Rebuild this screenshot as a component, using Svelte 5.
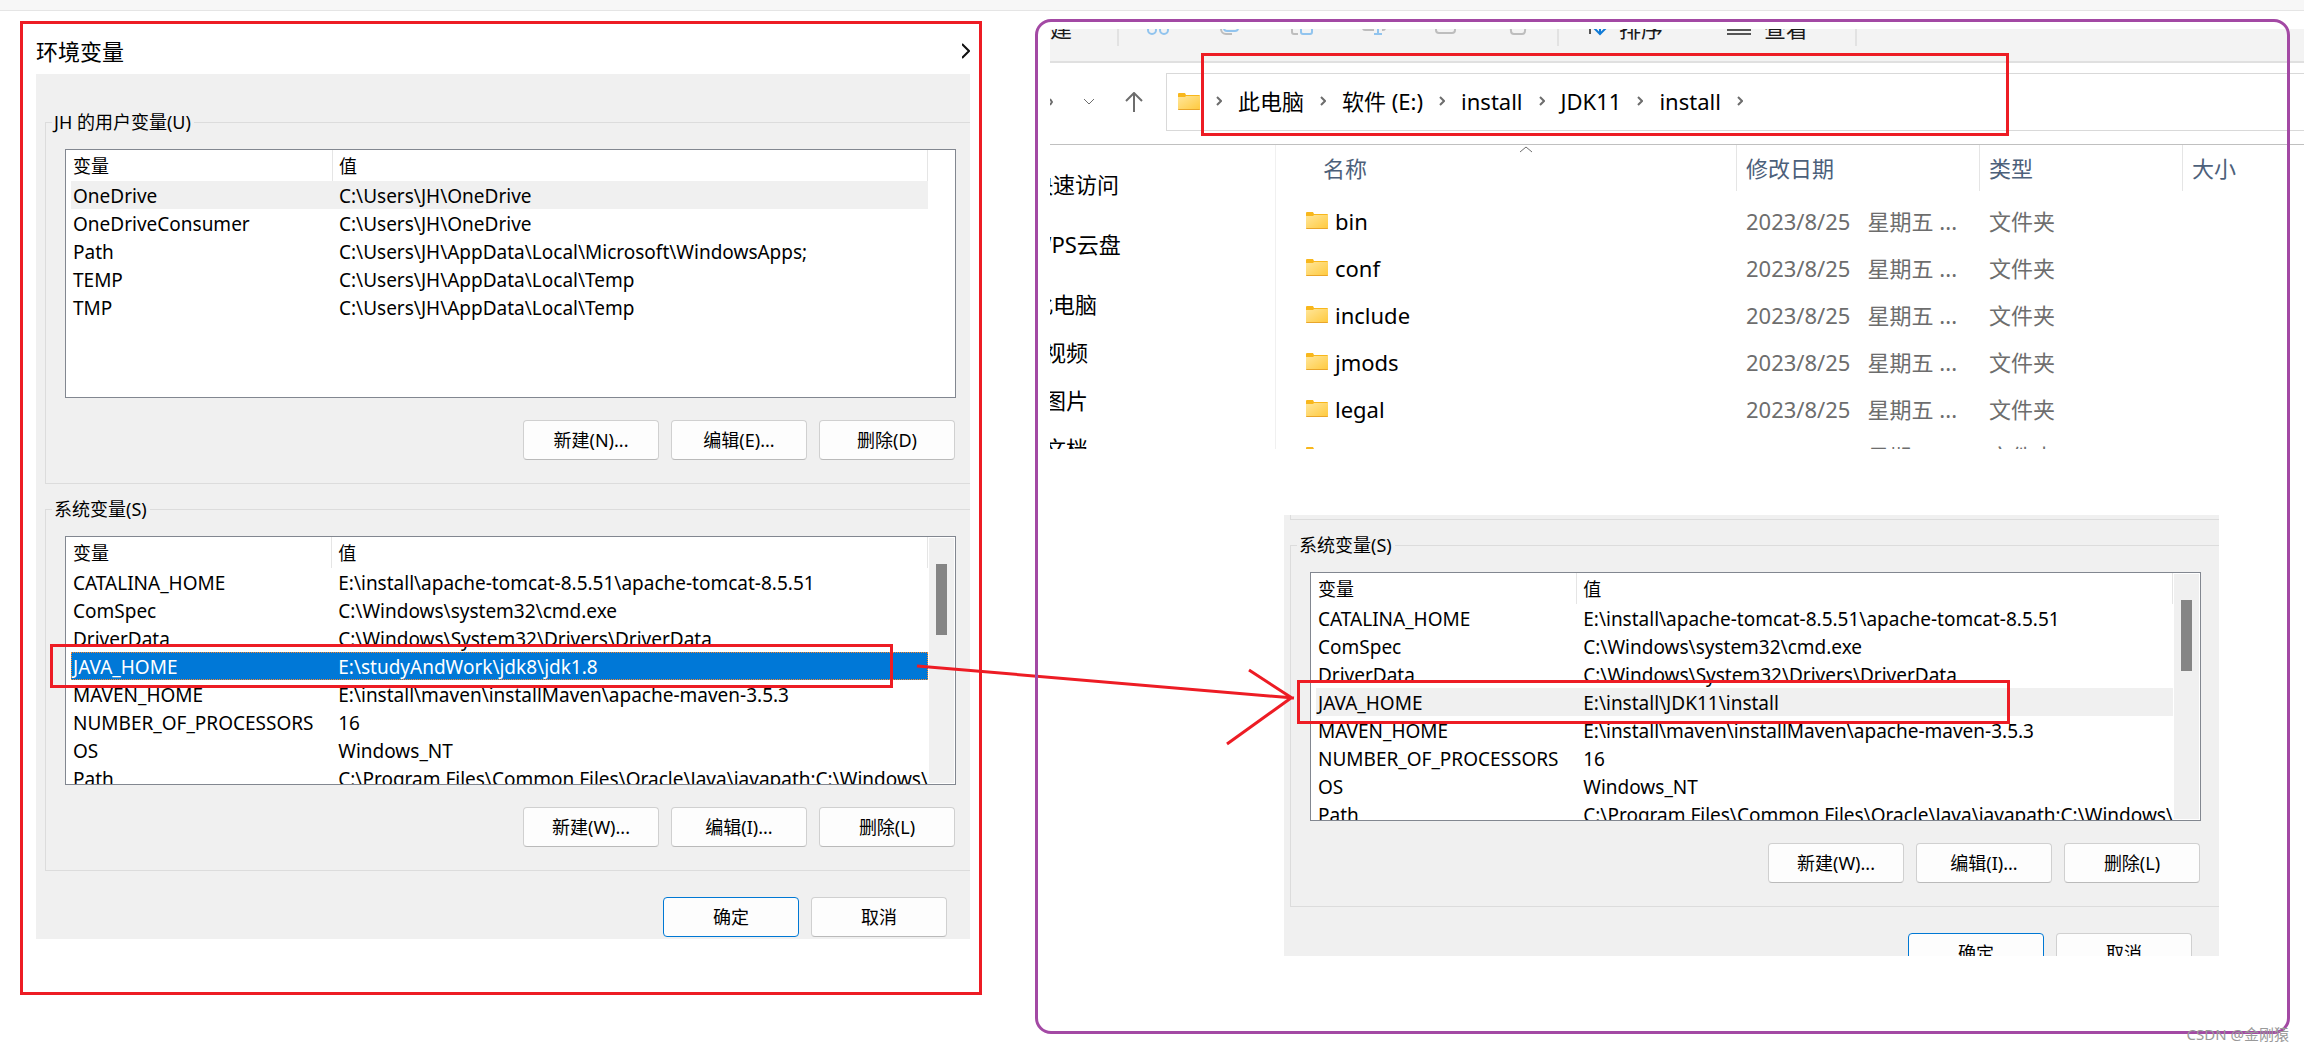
<script>
	const userVars = [
		{ name: 'OneDrive', value: 'C:\\Users\\JH\\OneDrive', state: 'inactive' },
		{ name: 'OneDriveConsumer', value: 'C:\\Users\\JH\\OneDrive' },
		{ name: 'Path', value: 'C:\\Users\\JH\\AppData\\Local\\Microsoft\\WindowsApps;' },
		{ name: 'TEMP', value: 'C:\\Users\\JH\\AppData\\Local\\Temp' },
		{ name: 'TMP', value: 'C:\\Users\\JH\\AppData\\Local\\Temp' }
	];

	const systemVars = (javaHome, state) => [
		{ name: 'CATALINA_HOME', value: 'E:\\install\\apache-tomcat-8.5.51\\apache-tomcat-8.5.51' },
		{ name: 'ComSpec', value: 'C:\\Windows\\system32\\cmd.exe' },
		{ name: 'DriverData', value: 'C:\\Windows\\System32\\Drivers\\DriverData' },
		{ name: 'JAVA_HOME', value: javaHome, state },
		{ name: 'MAVEN_HOME', value: 'E:\\install\\maven\\installMaven\\apache-maven-3.5.3' },
		{ name: 'NUMBER_OF_PROCESSORS', value: '16' },
		{ name: 'OS', value: 'Windows_NT' },
		{ name: 'Path', value: 'C:\\Program Files\\Common Files\\Oracle\\Java\\javapath;C:\\Windows\\' }
	];

	const before = systemVars('E:\\studyAndWork\\jdk8\\jdk1.8', 'selected');
	const after = systemVars('E:\\install\\JDK11\\install', 'inactive');

	const crumbs = ['此电脑', '软件 (E:)', 'install', 'JDK11', 'install'];
	const folders = ['bin', 'conf', 'include', 'jmods', 'legal', 'lib'];
	const places = [
		{ label: '快速访问' },
		{ label: 'WPS云盘' },
		{ label: '此电脑' },
		{ label: '视频', child: true },
		{ label: '图片', child: true },
		{ label: '文档', child: true }
	];
</script>

{#snippet varGroup(title, rows, buttons, scroll, marked)}
	<fieldset>
		<legend>{title}</legend>
		<div class="list-wrap">
			<div class="list">
				<table class="vars">
					<thead>
						<tr><th class="name">变量</th><th>值</th></tr>
					</thead>
					<tbody>
						{#each rows as row}
							<tr class={row.state}><td>{row.name}</td><td>{row.value}</td></tr>
						{/each}
					</tbody>
				</table>
				<div class="track" class:scroll>
					{#if scroll}<div class="thumb"></div>{/if}
				</div>
			</div>
			{#if marked}<div class="mark"></div>{/if}
		</div>
		<div class="buttons">
			{#each buttons as label}
				<button class="btn">{label}</button>
			{/each}
		</div>
	</fieldset>
{/snippet}

{#snippet confirm()}
	<div class="confirm">
		<button class="btn primary">确定</button>
		<button class="btn">取消</button>
	</div>
{/snippet}

{#snippet folder()}
	<svg class="folder" width="22" height="17" viewBox="0 0 22 17" aria-hidden="true">
		<path d="M0 1a1 1 0 0 1 1-1h6l1 2h13a1 1 0 0 1 1 1v2H0z" fill="#f8b71c" />
		<path d="M0 4h7l1-1h14v13a1 1 0 0 1-1 1H1a1 1 0 0 1-1-1z" fill="url(#folderFill)" />
		<path d="M0 16h22a1 1 0 0 1-1 1H1a1 1 0 0 1-1-1z" fill="#e9a52a" />
	</svg>
{/snippet}

{#snippet chevron()}
	<svg class="chevron" width="6" height="10" viewBox="0 0 6 10" aria-hidden="true"><path d="M1 1l4 4-4 4" /></svg>
{/snippet}

<svg class="defs" width="0" height="0" aria-hidden="true">
	<linearGradient id="folderFill" x1="0" y1="0" x2="1" y2="1">
		<stop offset="0" stop-color="#ffe69a" />
		<stop offset="1" stop-color="#ffc93c" />
	</linearGradient>
</svg>

<div class="page">
	<div class="topbar"></div>
	<main>
		<section class="left">
			<header class="title">
				<h1>环境变量</h1>
				<button class="close" aria-label="关闭">
					<svg width="8" height="16" viewBox="0 0 8 16"><path d="M0 1l7 7-7 7" /></svg>
				</button>
			</header>
			<div class="dialog">
				{@render varGroup('JH 的用户变量(U)', userVars, ['新建(N)...', '编辑(E)...', '删除(D)'], false, false)}
				{@render varGroup('系统变量(S)', before, ['新建(W)...', '编辑(I)...', '删除(L)'], true, true)}
				{@render confirm()}
			</div>
		</section>

		<section class="right">
			<div class="explorer">
				<div class="toolbar">
					<div class="tools">
						<button class="new">新建</button>
						<i class="sep"></i>
						<div class="icons">
							<button aria-label="剪切"><svg width="24" height="24" viewBox="0 0 24 24" stroke="#91c4ee"><circle cx="6" cy="14" r="4" /><circle cx="18" cy="14" r="4" /><path d="M8 11L17 0M16 11L7 0" /></svg></button>
							<button aria-label="复制"><svg width="24" height="24" viewBox="0 0 24 24" stroke="#bdbdbd"><path d="M3 4v9a5 5 0 0 0 5 5h6" /><path d="M6 0v12a3 3 0 0 0 3 3h8a3 3 0 0 0 3-3V0" stroke="#91c4ee" /></svg></button>
							<button aria-label="粘贴"><svg width="24" height="24" viewBox="0 0 24 24" stroke="#bdbdbd"><path d="M2 2v14a2 2 0 0 0 2 2h4" /><path d="M11 8v8a2 2 0 0 0 2 2h7a2 2 0 0 0 2-2V8a2 2 0 0 0-2-2h-7a2 2 0 0 0-2 2z" stroke="#91c4ee" /></svg></button>
							<button aria-label="重命名"><svg width="24" height="24" viewBox="0 0 24 24" stroke="#bdbdbd"><path d="M12 3H3a2 2 0 0 0-2 2v7a2 2 0 0 0 2 2h9M20 3h1a2 2 0 0 1 2 2v7a2 2 0 0 1-2 2h-1" /><path d="M12 0h8M16 0v18M12 18h8" stroke="#91c4ee" /></svg></button>
							<button aria-label="共享"><svg width="24" height="24" viewBox="0 0 24 24" stroke="#bdbdbd"><path d="M2 4v10a3 3 0 0 0 3 3h13a3 3 0 0 0 3-3V9" /></svg></button>
							<button aria-label="删除"><svg width="24" height="24" viewBox="0 0 24 24" stroke="#bdbdbd"><path d="M4 2l1 13a3 3 0 0 0 3 3h8a3 3 0 0 0 3-3l1-13" /></svg></button>
						</div>
						<i class="sep"></i>
						<button class="sort"><svg width="24" height="24" viewBox="0 0 24 24" stroke="#555"><path d="M4 18V2" /><path d="M14 2v16M8 12l6 6 6-6" stroke="#0f7ad6" /></svg>排序</button>
						<button class="view"><svg width="24" height="24" viewBox="0 0 24 24" stroke="#555"><path d="M0 9h24M0 14h24M0 18h24" /></svg>查看</button>
						<i class="sep"></i>
					</div>
				</div>
				<div class="address">
					<div class="nav">
						<svg width="3" height="10" viewBox="0 0 3 10" stroke-width="2"><path d="M0 2l2 3-2 3" /></svg>
						<svg width="10" height="6" viewBox="0 0 10 6"><path d="M0 0l5 5 5-5" /></svg>
						<svg width="18" height="20" viewBox="0 0 18 20" stroke-width="2"><path d="M9 20V1M1 9l8-8 8 8" /></svg>
					</div>
					<nav class="path">
						{@render folder()}
						{@render chevron()}
						{#each crumbs as crumb}
							<a href="#top">{crumb}</a>
							{@render chevron()}
						{/each}
					</nav>
				</div>
				<div class="body">
					<ul class="places">
						{#each places as place}
							<li class:child={place.child}>{place.label}</li>
						{/each}
					</ul>
					<table class="files">
						<thead>
							<tr>
								<th class="fname">
									<span>名称</span>
									<svg class="asc" width="12" height="7" viewBox="0 0 12 7"><path d="M0 6l6-5 6 5" /></svg>
								</th>
								<th class="date"><span>修改日期</span></th>
								<th class="type"><span>类型</span></th>
								<th class="size"><span>大小</span></th>
							</tr>
						</thead>
						<tbody>
							{#each folders as name}
								<tr>
									<td><div class="file">{@render folder()}{name}</div></td>
									<td>2023/8/25&nbsp;&nbsp; 星期五 ...</td>
									<td>文件夹</td>
									<td></td>
								</tr>
							{/each}
						</tbody>
					</table>
				</div>
				<div class="mark path-mark"></div>
			</div>

			<div class="dialog second">
				<div class="stub"></div>
				{@render varGroup('系统变量(S)', after, ['新建(W)...', '编辑(I)...', '删除(L)'], true, true)}
				{@render confirm()}
			</div>

			<svg class="arrow" width="384" height="84" viewBox="0 0 384 84" aria-hidden="true">
				<path d="M2 2L379 34M334 6l43 28M312 80l64-46" />
			</svg>
		</section>
	</main>
	<div class="watermark">CSDN @金刚猿</div>
</div>

<style>
	:global(body) {
		margin: 0;
		background: #fff;
	}
	.page {
		position: relative;
		overflow: hidden;
		font-family: "Noto Sans", "Noto Sans CJK SC", sans-serif;
		color: #000;
	}
	button {
		padding: 0;
		border: none;
		background: none;
		font-family: inherit;
		color: inherit;
	}
	svg {
		display: block;
		flex: none;
		fill: none;
	}
	.defs {
		position: absolute;
	}
	.topbar {
		height: 10px;
		background: #f7f7f7;
		border-bottom: 1px solid #e5e5e5;
	}
	main {
		display: grid;
		grid-template-columns: 962fr 1255fr;
		column-gap: 53px;
		align-items: start;
		padding: 8px 14px 16px 20px;
	}

	/* environment variables dialog */
	.left {
		margin-top: 2px;
		padding: 0 9px 53px 13px;
		border: 3px solid #ed1c24;
	}
	.title {
		display: flex;
		align-items: center;
		justify-content: space-between;
		height: 46px;
		padding-top: 4px;
	}
	h1 {
		margin: 0;
		font-size: 22px;
		line-height: 32px;
		font-weight: 400;
	}
	.close svg {
		stroke: #111;
		stroke-width: 2;
	}
	.dialog {
		--edge: 14px;
		--side: 9px;
		padding: 36px 0 2px var(--side);
		background: #f0f0f0;
	}
	fieldset {
		min-width: 0;
		margin: 0 0 13px;
		padding: 15px var(--edge) 23px 19px;
		border: 1px solid #dcdcdc;
		border-right: none;
	}
	legend {
		margin-left: -13px;
		padding: 0 3px 0 2px;
		font-size: 18px;
		line-height: 24px;
	}
	.list-wrap {
		position: relative;
	}
	.list {
		display: flex;
		box-sizing: border-box;
		height: 249px;
		padding-left: 5px;
		overflow: hidden;
		border: 1px solid #828790;
		background: #fff;
	}
	.vars {
		flex: 1;
		table-layout: fixed;
		border-collapse: collapse;
		min-width: 0;
		height: 0;
	}
	.vars th {
		height: 31px;
		padding: 0 0 0 6px;
		box-sizing: border-box;
		box-shadow: inset -1px 0 #e5e5e5;
		font-size: 18px;
		font-weight: 400;
		text-align: left;
		line-height: 28px;
	}
	.vars th.name {
		width: 262px;
	}
	.vars td {
		height: 26px;
		padding: 2px 0 0 6px;
		font-size: 19px;
		line-height: 26px;
		white-space: nowrap;
		overflow: hidden;
	}
	.vars th:first-child,
	.vars td:first-child {
		padding-left: 2px;
	}
	.inactive {
		background: #f0f0f0;
	}
	.selected {
		background: #0078d7;
		color: #fff;
		outline: 1px dotted #ff8728;
		outline-offset: -1px;
	}
	.track {
		flex: none;
		width: 25px;
		margin: 1px;
		box-sizing: border-box;
		padding: 26px 0 0 7px;
	}
	.track.scroll {
		background: #f0f0f0;
	}
	.thumb {
		width: 11px;
		height: 71px;
		background: #858585;
	}
	.buttons,
	.confirm {
		display: flex;
		justify-content: flex-end;
		gap: 12px;
	}
	.buttons {
		margin-top: 22px;
		padding-right: 1px;
	}
	.confirm {
		padding: 13px calc(var(--edge) + 9px) 0 0;
	}
	.btn {
		box-sizing: border-box;
		width: 136px;
		height: 40px;
		border: 1px solid #d0d0d0;
		border-bottom-color: #bababa;
		border-radius: 4px;
		background: #fdfdfd;
		font-size: 18px;
		line-height: 24px;
	}
	.btn.primary {
		border-color: #0078d4;
	}

	/* red annotations */
	.mark {
		position: absolute;
		box-sizing: border-box;
		top: 108px;
		left: -15px;
		right: 63px;
		height: 44px;
		border: 3px solid #ed1c24;
	}
	.second .mark {
		left: -13px;
		right: 191px;
	}
	.path-mark {
		top: 24px;
		left: 151px;
		right: auto;
		width: 808px;
		height: 83px;
	}
	.arrow {
		position: absolute;
		left: -120px;
		top: 645px;
		stroke: #ed1c24;
		stroke-width: 3;
	}

	/* right frame, drawn above what spills out of it */
	.right {
		position: relative;
		padding: 10px 3px 78px 15px;
	}
	.right::after {
		content: "";
		position: absolute;
		inset: 0;
		border: 3px solid #a349a4;
		border-radius: 16px;
		pointer-events: none;
	}
	.explorer {
		position: relative;
		height: 420px;
		margin-right: -17px;
		overflow: hidden;
		font-size: 22px;
		line-height: 32px;
	}
	.toolbar {
		height: 32px;
		overflow: hidden;
		background: #f3f3f3;
		border-bottom: 2px solid #e0e0e0;
	}
	.tools {
		display: flex;
		align-items: center;
		height: 56px;
		margin-top: -29px;
		color: #1a1a1a;
	}
	.tools button {
		display: flex;
		align-items: center;
		font-size: 22px;
		line-height: 32px;
	}
	.tools svg {
		stroke-width: 2;
	}
	.tools .new {
		margin: 0 45px 0 -22px;
	}
	.sep {
		width: 2px;
		height: 36px;
		background: #e2e2e2;
	}
	.icons {
		display: flex;
		gap: 48px;
		margin: 0 27px;
	}
	.tools .sort {
		gap: 9px;
		margin: 0 64px 0 27px;
	}
	.tools .view {
		gap: 13px;
		margin-right: 47px;
	}
	.address {
		display: flex;
		align-items: center;
		height: 58px;
		padding: 10px 0 13px;
		border-bottom: 1px solid #c0c0c0;
	}
	.nav {
		display: flex;
		align-items: center;
		gap: 31px;
		width: 116px;
		stroke: #6d6d6d;
	}
	.path {
		display: flex;
		flex: 1;
		align-items: center;
		gap: 16px;
		box-sizing: border-box;
		height: 58px;
		padding: 0 0 2px 11px;
		border: 1px solid #d9d9d9;
		border-right: none;
	}
	.path a {
		color: #000;
		text-decoration: none;
	}
	.chevron {
		stroke: #6d6d6d;
		stroke-width: 2;
	}
	.body {
		display: flex;
	}
	.places {
		flex: none;
		box-sizing: border-box;
		width: 226px;
		margin: 0;
		padding: 15px 0 0;
		list-style: none;
		border-right: 1px solid #f0f0f0;
	}
	.places li {
		margin: 0 0 12px -19px;
		line-height: 48px;
		white-space: nowrap;
	}
	.places li.child {
		margin: 0 0 0 -6px;
	}
	.places li:nth-child(3) {
		margin-bottom: 0;
	}
	.files {
		flex: 1;
		table-layout: fixed;
		border-collapse: collapse;
	}
	.files th {
		position: relative;
		height: 52px;
		padding: 0;
		vertical-align: top;
		font-weight: 400;
		text-align: left;
		color: #4c607a;
	}
	.files th span {
		display: block;
		box-sizing: border-box;
		height: 46px;
		padding: 7px 0 0 9px;
		border-right: 1px solid #e5e5e5;
	}
	.files .size span {
		border-right: none;
	}
	.files .fname span {
		padding-left: 47px;
	}
	.date {
		width: 243px;
	}
	.type {
		width: 203px;
	}
	.size {
		width: 121px;
	}
	.asc {
		position: absolute;
		top: 1px;
		left: 53%;
		stroke: #6d6d6d;
	}
	.files td {
		height: 47px;
		padding: 0 0 0 9px;
		white-space: nowrap;
		color: #6d6d6d;
	}
	.files td:first-child {
		padding-left: 30px;
		color: #000;
	}
	.file {
		display: flex;
		align-items: center;
		gap: 7px;
	}

	.second {
		--edge: 18px;
		--side: 6px;
		height: 441px;
		box-sizing: border-box;
		margin: 66px 68px 0 234px;
		padding-top: 0;
		overflow: hidden;
	}
	.stub {
		height: 4px;
		margin-bottom: 13px;
		border: solid #dcdcdc;
		border-width: 0 0 1px 1px;
	}
	.watermark {
		position: absolute;
		right: 15px;
		bottom: 6px;
		font-size: 15px;
		line-height: 20px;
		color: #999;
	}
</style>
